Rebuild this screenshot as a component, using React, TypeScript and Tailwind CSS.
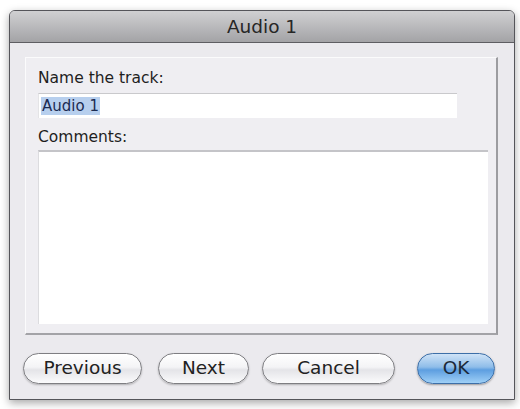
import React from 'react';

const font = { fontFamily: '"DejaVu Sans", "Lucida Grande", Verdana, sans-serif' };

function PillButton({ label, width, primary }: { label: string; width: string; primary?: boolean }) {
  return (
    <button
      className={`${width} h-[31px] rounded-full border text-[18.5px] leading-none ${
        primary
          ? 'border-[#3d6fa8] bg-[linear-gradient(to_bottom,#cfe3f7_0%,#8fbde9_45%,#5d9ee0_55%,#9fd0f7_100%)] text-[#1b2a3a] shadow-[0_1px_2px_rgba(0,0,0,0.35)]'
          : 'border-[#7e7e82] bg-[linear-gradient(to_bottom,#ffffff_0%,#f4f4f6_45%,#e4e4e8_55%,#fbfbfc_100%)] text-[#222222] shadow-[0_1px_2px_rgba(0,0,0,0.25)]'
      }`}
      style={font}
    >
      {label}
    </button>
  );
}

export default function App() {
  return (
    <div className="w-[520px] h-[409px] bg-white pl-[9px] pt-[10px]" style={font}>
      <div className="w-[506px] h-[390px] flex flex-col border border-[#55555a] rounded-t-[6px] bg-[#ebeaee] shadow-[0_3px_8px_rgba(0,0,0,0.35)] overflow-hidden">
        <div className="h-[32px] flex items-center justify-center border-b border-[#5e5e62] bg-[linear-gradient(to_bottom,#d0d0d2,#a3a3a6)] text-[18.5px] text-[#262626]">
          Audio 1
        </div>
        <div className="flex-1 px-[15px] pt-[14px]">
          <div className="w-[473px] h-[278px] border-t border-l border-r-2 border-b-2 border-t-[#fbfbfc] border-l-[#fbfbfc] border-r-[#9c9ca0] border-b-[#a3a3a7] bg-[#efeef2] pl-[12px] pt-[10px]">
            <div className="text-[15.5px] text-[#1e1e1e] leading-[20px]">Name the track:</div>
            <div className="mt-[5px] w-[419px] h-[25px] bg-white border-t border-t-[#c9c9cc] border-l border-l-[#e4e4e6] flex items-center pl-[2px]">
              <span className="bg-[#b7cfee] px-[1px] text-[15px] text-[#1b2b52] leading-[18px]">Audio 1</span>
            </div>
            <div className="mt-[9px] text-[15.5px] text-[#1e1e1e] leading-[20px]">Comments:</div>
            <div className="mt-[3px] w-[450px] h-[174px] bg-white border-t-2 border-t-[#c4c4c8] border-l border-l-[#dcdcdf]" />
          </div>
          <div className="flex items-center mt-[18px] -ml-[2px]">
            <PillButton label="Previous" width="w-[119px]" />
            <div className="w-[16px]" />
            <PillButton label="Next" width="w-[91px]" />
            <div className="w-[13px]" />
            <PillButton label="Cancel" width="w-[133px]" />
            <div className="w-[22px]" />
            <PillButton label="OK" width="w-[78px]" primary />
          </div>
        </div>
      </div>
    </div>
  );
}
